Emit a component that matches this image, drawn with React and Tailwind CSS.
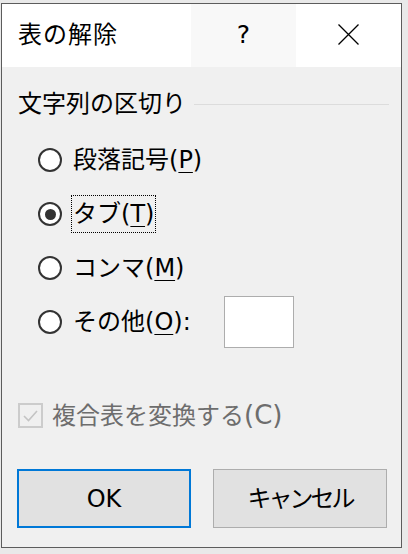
import React from 'react';

const jp = 'font-["DejaVu_Sans","Noto_Sans_CJK_JP",sans-serif]';

export default function App() {
  return (
    <div className={`w-[408px] h-[554px] bg-[#e9e9e9] pt-[3px] pl-[1px] ${jp}`}>
      <div className="w-[401px] h-[545px] border border-[#5c5c5c] bg-[#f0f0f0] flex flex-col">
        <TitleBar />

        <div className="flex flex-col flex-1">
          <div className="flex items-center h-[32px] mt-[21px] pl-[16px] pr-[12px]">
            <span className="text-[24px] leading-none text-black">文字列の区切り</span>
            <div className="flex-1 h-px bg-[#dcdcdc] ml-[8px] mt-[1px]" />
          </div>

          <div className="flex flex-col mt-[13px] pl-[36px]">
            <RadioRow label="段落記号" hotkey="P" />
            <RadioRow label="タブ" hotkey="T" checked focused />
            <RadioRow label="コンマ" hotkey="M" />
            <RadioRow label="その他" hotkey="O" colon>
              <div className="w-[70px] h-[52px] ml-[31px] bg-white border border-[#adadad]" />
            </RadioRow>
          </div>

          <div className="flex items-center h-[40px] mt-[46px] pl-[16px]">
            <div className="w-[25px] h-[25px] border-2 border-[#cccccc] flex items-center justify-center">
              <svg width="17" height="17" viewBox="0 0 17 17" fill="none">
                <path d="M2 9 L6.5 13.5 L15 4" stroke="#c4c4c4" strokeWidth="1.6" />
              </svg>
            </div>
            <span className="ml-[9px] text-[24px] leading-none text-[#6d6d6d]">
              複合表を変換する<span className="text-[26px]">(C)</span>
            </span>
          </div>

          <div className="flex gap-[22px] mt-[34px] pl-[15px]">
            <button className="w-[174px] h-[59px] bg-[#e1e1e1] border-2 border-[#0078d7] text-[24px] text-black">
              OK
            </button>
            <button className="w-[174px] h-[59px] bg-[#e1e1e1] border border-[#adadad] text-[24px] tracking-[-3px] text-black">
              キャンセル
            </button>
          </div>
        </div>
      </div>
    </div>
  );
}

function TitleBar() {
  return (
    <div className="flex h-[63px] bg-white">
      <div className="flex-1 flex items-center pl-[16px] pb-[2px]">
        <span className="text-[24px] leading-none tracking-[1px] text-black">表の解除</span>
      </div>
      <div className="w-[105px] flex items-center justify-center bg-[#f8f8f8] pb-[2px]">
        <span className="text-[25px] leading-none text-black">?</span>
      </div>
      <div className="w-[105px] flex items-center justify-center pb-[2px]">
        <svg width="21" height="21" viewBox="0 0 21 21" fill="none">
          <path d="M0.5 0.5 L20.5 20.5 M20.5 0.5 L0.5 20.5" stroke="#000" strokeWidth="1.3" />
        </svg>
      </div>
    </div>
  );
}

function RadioRow({ label, hotkey, checked, focused, colon, children }) {
  return (
    <div className="flex items-center h-[54px]">
      <div className="w-[24px] h-[24px] rounded-full border-2 border-[#333333] bg-white flex items-center justify-center">
        {checked && <div className="w-[11px] h-[11px] rounded-full bg-[#333333]" />}
      </div>
      <span
        className={`ml-[9px] px-px py-[4px] text-[24px] leading-[28px] text-black border border-dotted ${
          focused ? 'border-black' : 'border-transparent'
        }`}
      >
        {label}(<span className="underline underline-offset-[4px] decoration-1">{hotkey}</span>){colon && ':'}
      </span>
      {children}
    </div>
  );
}
